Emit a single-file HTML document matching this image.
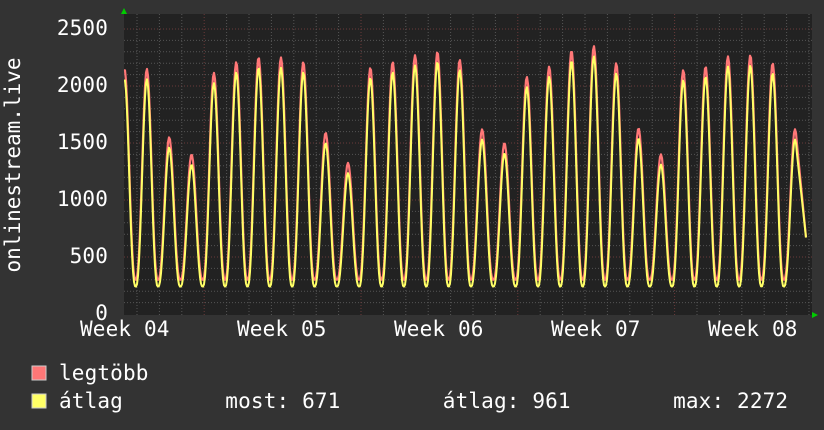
<!DOCTYPE html>
<html><head><meta charset="utf-8"><style>
html,body{margin:0;padding:0;background:#333;}
body{width:824px;height:430px;overflow:hidden;position:relative;font-family:"DejaVu Sans Mono","Liberation Mono",monospace;color:#fff;}
.t{position:absolute;font-size:21px;letter-spacing:0.15px;white-space:pre;line-height:24px;}
.r{position:absolute;right:716px;font-size:21px;letter-spacing:0.15px;line-height:24px;}
</style></head><body>
<svg width="824" height="430" style="position:absolute;left:0;top:0">
<rect x="124" y="14" width="688" height="301" fill="#222"/>
<g id="grid"></g>
<path id="red" fill="none" stroke="#f77" stroke-width="2.2" stroke-linejoin="round"/>
<path id="yel" fill="none" stroke="#ff6" stroke-width="2" stroke-linejoin="round"/>
<polygon points="121,14 127,14 124,8" fill="#0c0"/>
<polygon points="812,312 812,318 818,315" fill="#0c0"/>
<text transform="translate(20,165) rotate(-90)" fill="#fff" font-family="DejaVu Sans Mono,monospace" font-size="21" text-anchor="middle">onlinestream.live</text>
<rect x="32" y="366" width="14" height="14" fill="#f77" stroke="#ccc" stroke-width="1"/>
<rect x="32" y="394" width="14" height="14" fill="#ff6" stroke="#ccc" stroke-width="1"/>
</svg>
<div class="r" style="top:16px">2500</div>
<div class="r" style="top:73px">2000</div>
<div class="r" style="top:130px">1500</div>
<div class="r" style="top:187px">1000</div>
<div class="r" style="top:244px">500</div>
<div class="r" style="top:301px">0</div>
<div class="t" style="left:80px;top:317px">Week 04</div>
<div class="t" style="left:237px;top:317px">Week 05</div>
<div class="t" style="left:394px;top:317px">Week 06</div>
<div class="t" style="left:551px;top:317px">Week 07</div>
<div class="t" style="left:708px;top:317px">Week 08</div>
<div class="t" style="left:59px;top:361px">legtöbb</div>
<div class="t" style="left:59px;top:389px">átlag        most: 671        átlag: 961        max: 2272</div>
<script>
var y0=314,k=57/500;
var g='';
for(var v=100;v<=2500;v+=100){var y=y0-v*k;var maj=v%500==0;g+='<line x1="124" x2="812" y1="'+y+'" y2="'+y+'" stroke="'+(maj?'#6a3a3a':'#555')+'" stroke-dasharray="1,2"/>';}
for(var x=137;x<812;x+=22.4){var maj=false;[203,360,517,674].forEach(function(m){if(Math.abs(m-x)<3)maj=true;});g+='<line y1="14" y2="315" x1="'+x+'" x2="'+x+'" stroke="'+(maj?'#6a3a3a':'#555')+'" stroke-dasharray="1,2"/>';}
document.getElementById('grid').innerHTML=g;
var peaks=[2150,2150,1550,1400,2115,2210,2250,2250,2210,1590,1325,2160,2210,2270,2300,2230,1620,1500,2080,2170,2310,2350,2200,1630,1400,2140,2170,2260,2270,2200,1620,1200];
var P=22.35,x0=124.5;
function val(x,avg){var t=(x-x0)/P;var i=Math.round(t);var ph=t-i;var pk=peaks[Math.max(0,Math.min(peaks.length-1,i))];var tr=avg?240:300;if(avg)pk-=90;var f=Math.pow((1+Math.cos(2*Math.PI*ph))/2,1.3);return tr+(pk-tr)*f;}
function path(avg){var d='';var vs=val(797,avg);for(var x=124;x<=806;x+=1){var v=val(x,avg);if(x>=797){v=vs+(671-vs)*((x-797)/9);}d+=(x==124?'M':'L')+x+','+(y0-v*k).toFixed(1);}return d;}
document.getElementById('red').setAttribute('d',path(false));
document.getElementById('yel').setAttribute('d',path(true));
</script>
</body></html>
